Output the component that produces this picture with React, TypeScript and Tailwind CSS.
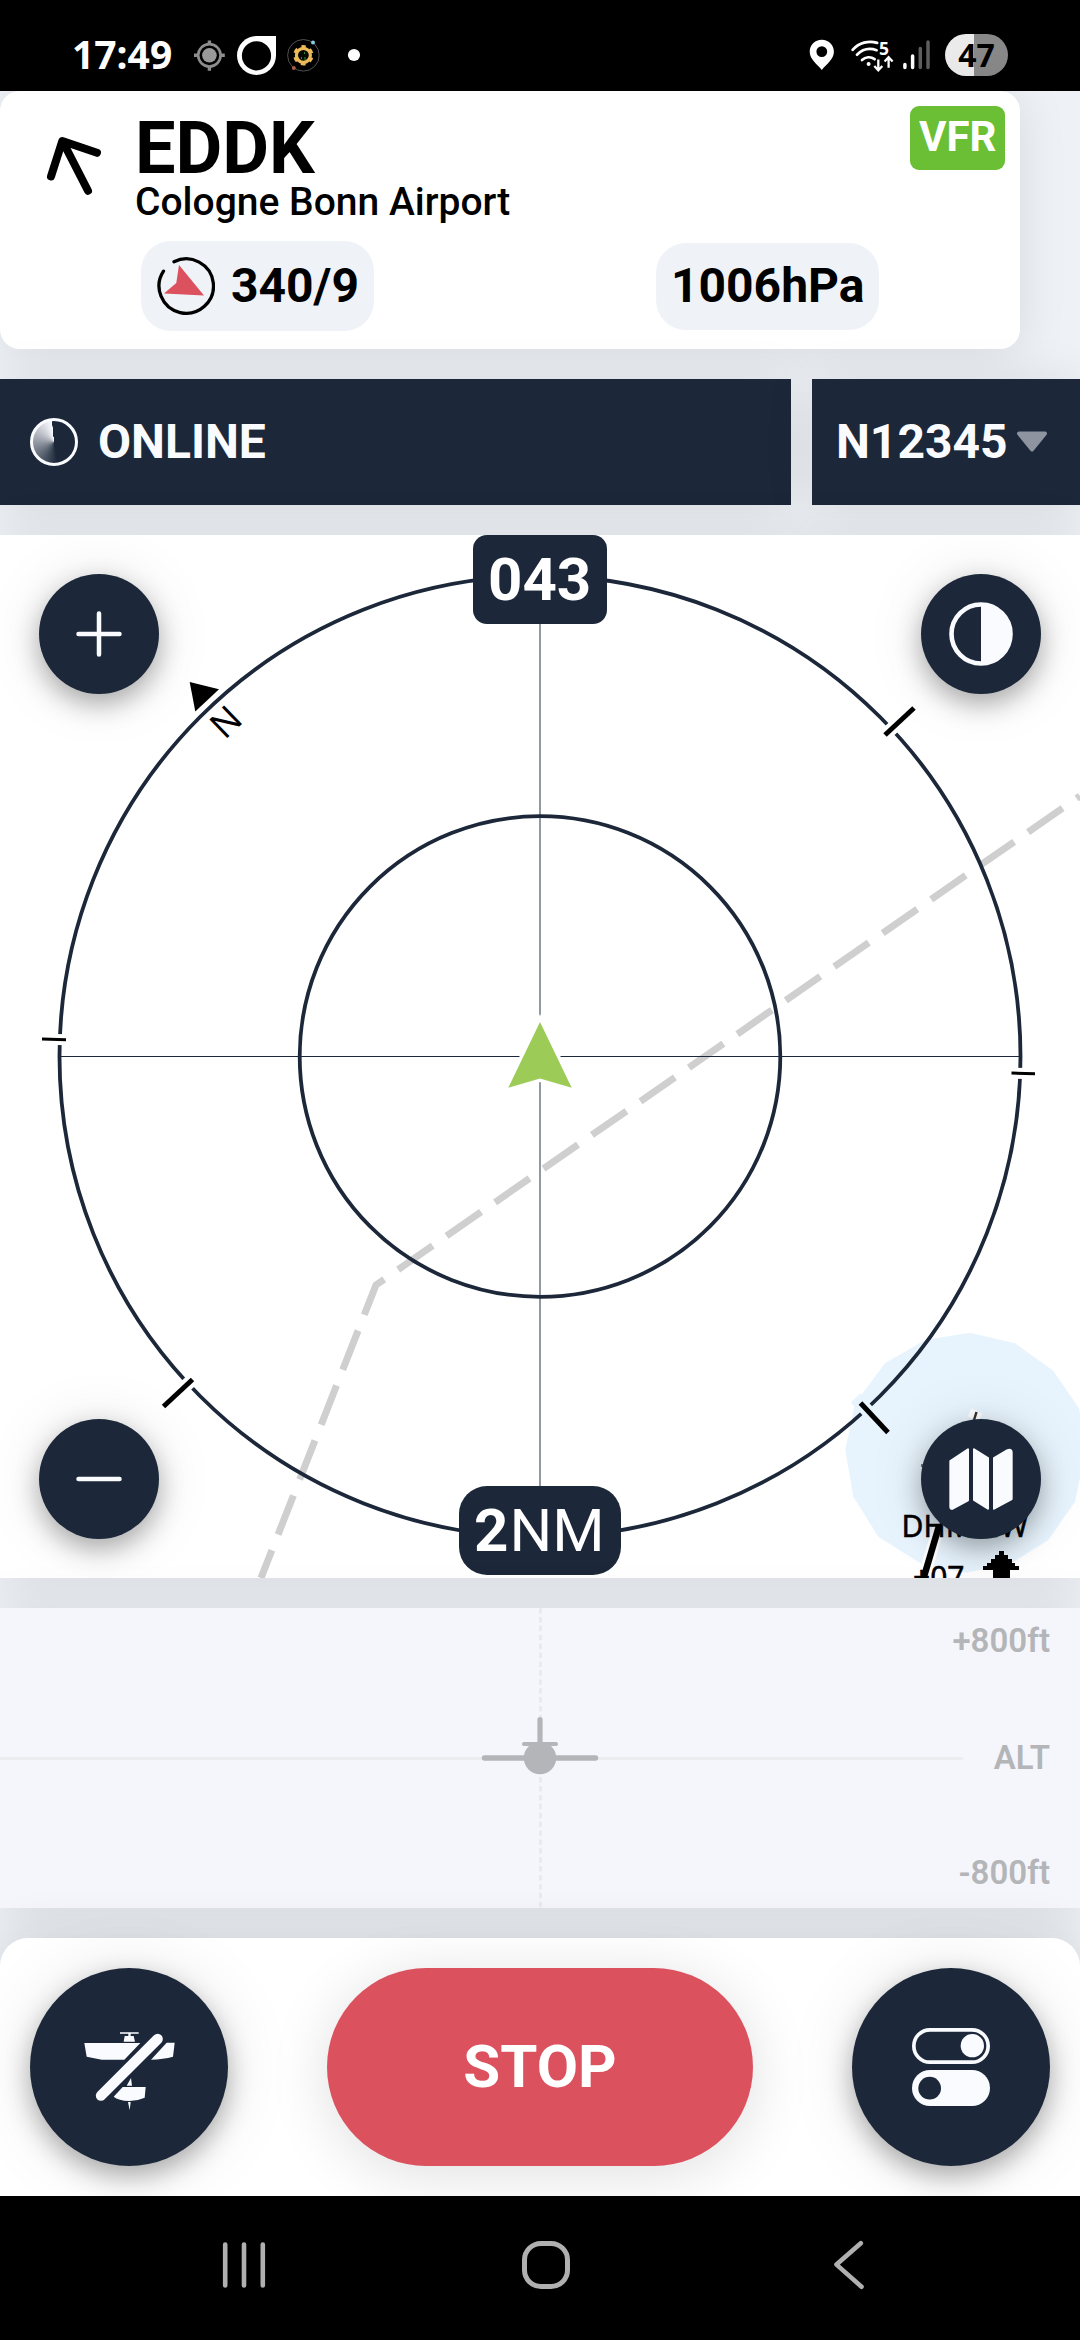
import React from "react";

const NAVY = "#1c2839";
const LIGHT = "#fafbff";

function StatusBar() {
  return (
    <header className="flex h-[91px] items-center bg-black pt-[19px] pl-[72px] pr-[72px] text-white">
      <span className="w-[118px] font-['Noto_Sans'] text-[39px] font-bold leading-[35px] pb-[4px]">17:49</span>
      <svg width="180" height="44" viewBox="190 33 180 44" fill="none">
        <circle cx="209.4" cy="55.3" r="11.2" stroke="#8e8e8e" strokeWidth="2.6" />
        <circle cx="209.4" cy="55.3" r="7.3" fill="#9a9a9a" />
        <path d="M209.4 40.5v4M209.4 66v4.8M194 55.3h4.5M220 55.3h4.8" stroke="#8e8e8e" strokeWidth="3.4" />
        <path d="M256.5 36H276v19.5A19.5 19.5 0 1 1 256.5 36Z" fill="#fff" />
        <circle cx="256.5" cy="55.8" r="14.6" fill="#000" />
        <circle cx="303.4" cy="55.3" r="15.8" stroke="#5b5b5b" strokeWidth="0.9" />
        <circle cx="303.4" cy="55.3" r="7" stroke="#eebb5c" strokeWidth="3.2" fill="#050a05" />
        <circle cx="303.4" cy="55.3" r="8.8" stroke="#eebb5c" strokeWidth="2.8" strokeDasharray="4.6 4.615" strokeDashoffset="2.3" transform="rotate(-90 303.4 55.3)" />
        <path d="M301.5 57v2M304.5 52v2M305 57v3M301.8 59.8v1" stroke="#2c8a3a" strokeWidth="1" />
        <circle cx="313" cy="42.4" r="2" fill="#86cfe0" />
        <circle cx="293.8" cy="68" r="2" fill="#a85f45" />
        <circle cx="354" cy="55" r="6.1" fill="#fff" />
      </svg>
      <div className="flex-1" />
      <svg width="126" height="44" viewBox="806 33 126 44" fill="none">
        <path fillRule="evenodd" d="M821.8 39.8c6.9 0 12.1 5.4 12.1 12 0 7.600-7.500 12.600-12.100 18.100-4.600-5.500-12.100-10.500-12.100-18.100 0-6.600 5.200-12 12.100-12Zm0 6.400a5.400 5.400 0 1 0 0 10.800 5.400 5.400 0 0 0 0-10.800Z" fill="#fff" />
        <path d="M852.6 49.800c6.600-7.200 16-9.600 24.600-6.900M857 54.800c5-5.200 12.200-7.300 19.600-4.600M862 60c3.400-3.200 8.600-3.800 12.600-0.800" stroke="#fff" strokeWidth="2.700" strokeLinecap="round" />
        <circle cx="868.600" cy="64" r="2" fill="#fff" />
        <text x="879" y="54.500" fontFamily="Noto Sans, sans-serif" fontWeight="700" fontSize="17.500" fill="#fff">5</text>
        <path d="M878.300 59.500v10M874.300 66l4 4.300 4-4.300M888.600 67.800v-10M884.600 61.500l4-4.300 4 4.300" stroke="#fff" strokeWidth="2.300" />
        <g strokeWidth="3.500" strokeLinecap="round">
          <path d="M904.900 64.500v3M912.600 56v11.500" stroke="#fff" />
          <path d="M920.300 48.500v19M928 42v25.500" stroke="#5e5e5e" />
        </g>
      </svg>
      <div className="ml-[13px] flex h-[42px] w-[63px] items-center justify-center rounded-full bg-linear-to-r from-[#ebebeb] from-46% to-[#888888] to-46%">
        <span className="font-['Noto_Sans'] text-[32px] font-bold leading-[32px] text-black">47</span>
      </div>
    </header>
  );
}

function AirportCard() {
  return (
    <section className="flex h-[258px] w-[1020px] rounded-[20px] bg-white shadow-[0_4px_50px_rgba(0,0,0,0.10)]">
      <div className="w-[135px] pt-[38px] pl-[40px]">
        <svg width="66" height="72" viewBox="40 129 66 72" fill="none" stroke="#000" strokeWidth="8" strokeLinecap="round" strokeLinejoin="round">
          <path d="M51 176.500 62.300 141l34.700 11.800M63 142l25 48.800" />
        </svg>
      </div>
      <div className="flex-1 pt-[22px] text-black">
        <h1 className="text-[72px] font-bold leading-[72px]">EDDK</h1>
        <p className="text-[39px] font-medium leading-[34px]">Cologne Bonn Airport</p>
        <div className="mt-[22px] ml-[6px] flex items-center justify-between pr-[20px]">
          <div className="flex h-[90px] w-[233px] items-center rounded-[30px] bg-[#eff2f7] pl-[16px]">
            <svg width="58" height="62" viewBox="157 255 58 62" fill="none">
              <path d="M174 261.800A27.200 27.200 0 1 1 163.500 271.200" stroke="#000" strokeWidth="3.300" strokeLinecap="round" />
              <path d="M179 265l25 30.600-40-2.200 12.300-10.400Z" fill="#dc515e" />
            </svg>
            <span className="ml-[16px] text-[48px] font-bold leading-[48px]">340/9</span>
          </div>
          <div className="mr-[-5px] flex h-[87px] w-[223px] items-center rounded-[30px] bg-[#eff2f7] pl-[15px] text-[48px] font-bold leading-[48px]">
            1006hPa
          </div>
        </div>
      </div>
      <div className="w-[126px] pt-[15px]">
        <div className="ml-[16px] h-[64px] w-[95px] rounded-[9px] bg-[#6abf35] pt-[9px] pl-[9px] text-[42px] font-bold leading-[44px] text-white">VFR</div>
      </div>
    </section>
  );
}

function StatusRow() {
  return (
    <section className="mt-[30px] flex h-[126px] gap-[21px] text-[48px] font-bold leading-[48px] text-[#fafbff]">
      <div className="flex w-[791px] items-center bg-[#1c2839] pl-[30px] shadow-[0_4px_50px_rgba(0,0,0,0.10)]">
        <div className="h-[48px] w-[48px] rounded-full border-[3px] border-[#fafbff] bg-[conic-gradient(#1c2839_0deg,#1c2839_170deg,#fafbff_354deg,#1c2839_355deg)]" />
        <span className="ml-[20px]">ONLINE</span>
      </div>
      <div className="flex flex-1 items-center bg-[#1c2839] pl-[24px] shadow-[0_4px_50px_rgba(0,0,0,0.10)]">
        <span>N12345</span>
        <svg className="ml-[8px]" width="33" height="22" viewBox="0 0 33 22">
          <path d="M3 2.500h26L16 18.500Z" fill="#8e94a0" stroke="#8e94a0" strokeWidth="4" strokeLinejoin="round" />
        </svg>
      </div>
    </section>
  );
}

const BLOB =
  "970,1332.700 1015,1343.300 1053.300,1370.700 1079,1408.300 1086,1450 1075,1501.700 1048.300,1540 1011.700,1563.300 966.700,1572.700 923.300,1565 878.300,1536.700 853.300,1496.700 845.300,1450 855,1403.300 885,1363.300 925,1340";

function Tick({ x1, y1, x2, y2, w }: { x1: number; y1: number; x2: number; y2: number; w: number }) {
  return (
    <g fill="none">
      <line x1={x1} y1={y1} x2={x2} y2={y2} stroke="#fff" strokeWidth={w + 8} />
      <line x1={x1} y1={y1} x2={x2} y2={y2} stroke="#000" strokeWidth={w} />
    </g>
  );
}

function RoundButton({ className, children }: { className: string; children: React.ReactNode }) {
  return (
    <button className={`absolute flex h-[120px] w-[120px] items-center justify-center rounded-full bg-[#1c2839] shadow-[0_10px_26px_rgba(0,0,0,0.30),0_2px_60px_rgba(0,0,0,0.10)] ${className}`}>
      {children}
    </button>
  );
}

function MapView() {
  return (
    <section className="relative mt-[30px] h-[1043px] overflow-hidden bg-white shadow-[0_4px_50px_rgba(0,0,0,0.10)]">
      <svg className="block" width="1080" height="1043" viewBox="0 535 1080 1043" fill="none">
        <path d="M1080 796 376 1285 261 1578" stroke="#cfcfcf" strokeWidth="7" strokeDasharray="42 17" strokeDashoffset="37.800" />
        <polygon points={BLOB} fill="#e8f4fd" />
        <g stroke={NAVY}>
          <circle cx="540" cy="1056.500" r="480.500" strokeWidth="3.800" />
          <circle cx="540" cy="1056.500" r="240.300" strokeWidth="3.800" />
          <path d="M60 1056.500H1020" strokeWidth="1" />
          <path d="M540 576V1536" strokeWidth="1.200" strokeOpacity="0.800" />
        </g>
        <path d="M540 1022 571.700 1087.700 540 1078.500 508.300 1087.700Z" fill="#fff" stroke="#fff" strokeWidth="7" />
        <path d="M540 1022 571.700 1087.700 540 1078.500 508.300 1087.700Z" fill="#9ccb57" />

        <Tick x1={914} y1={708} x2={885} y2={735} w={5} />
        <Tick x1={192.500} y1={1379.500} x2={163.500} y2={1406.500} w={5} />
        <Tick x1={42} y1={1039} x2={66} y2={1039.700} w={3} />
        <Tick x1={1011.500} y1={1073} x2={1035} y2={1073.700} w={3} />
        <line x1="855.500" y1="1398" x2="889" y2="1434" stroke="#e8f4fd" strokeWidth="13" />
        <line x1="860.500" y1="1403" x2="888" y2="1432.500" stroke="#000" strokeWidth="5" />

        <path d="M189.700 682 219 689.300 195.300 711.500Z" fill="#000" stroke="#fff" strokeWidth="5" paintOrder="stroke" />
        <text transform="translate(225.500 721.700) rotate(-44)" x="-13.500" y="13" fontFamily="Noto Sans, sans-serif" fontSize="36" fill="#000" stroke="#fff" strokeWidth="3" paintOrder="stroke">N</text>

        <g stroke="#fff" strokeWidth="12">
          <path d="M939 1526 923 1580M977 1411l-4 8" />
        </g>
        <path d="M976.500 1412l-2.500 8" stroke="#333" strokeWidth="2.500" />
        <path d="M921 1465.500h4" stroke="#777" strokeWidth="3" />
        <g fontFamily="Noto Sans, sans-serif" fontSize="30" fill="#000" stroke="#000" strokeWidth="0.500">
          <text x="901.500" y="1536.500">DHMMW</text>
          <text x="913" y="1588">+07</text>
        </g>
        <path d="M939 1526 923 1580" stroke="#000" strokeWidth="6.500" />
        <path shapeRendering="crispEdges" d="M998.500 1551h5v4h4v4h4v4h3v3h4v4h-9v9h-17v-9h-10v-4h4v-3h4v-4h4v-4h4Z" fill="#000" />
      </svg>

      <div className="absolute top-0 left-[473px] h-[89px] w-[134px] rounded-[14px] bg-[#1c2839] pl-[15px] text-[60px] font-bold leading-[89px] text-white">043</div>
      <div className="absolute top-[951px] left-[459px] h-[89px] w-[162px] rounded-[28px] bg-[#1c2839] pl-[15px] text-[60px] leading-[89px] text-white">
        <b>2</b><span className="ml-px">NM</span>
      </div>

      <RoundButton className="top-[39px] left-[39px]">
        <svg width="48" height="48" viewBox="0 0 48 48" stroke={LIGHT} strokeWidth="4.500" strokeLinecap="round"><path d="M24 3.500v41M3.500 24h41" /></svg>
      </RoundButton>
      <RoundButton className="top-[39px] right-[39px]">
        <svg width="64" height="64" viewBox="0 0 64 64">
          <circle cx="32" cy="32" r="29.500" fill="none" stroke={LIGHT} strokeWidth="4.600" />
          <path d="M32 2a30 30 0 0 1 0 60Z" fill={LIGHT} />
        </svg>
      </RoundButton>
      <RoundButton className="bottom-[39px] left-[39px]">
        <svg width="48" height="48" viewBox="0 0 48 48" stroke={LIGHT} strokeWidth="4.500" strokeLinecap="round"><path d="M3.500 24h41" /></svg>
      </RoundButton>
      <RoundButton className="right-[39px] bottom-[39px]">
        <svg width="120" height="120" viewBox="483 357 360 360" fill={LIGHT} stroke={LIGHT} strokeWidth="6" strokeLinejoin="round">
          <path d="M571 483 624 448V601L578 626Q571 628 571 620Z" />
          <path d="M642 448 684 474V626L642 600Z" />
          <path d="M702 474 741 451Q755 446 755 457V597L702 626Z" />
        </svg>
      </RoundButton>
    </section>
  );
}

function AltitudePanel() {
  return (
    <section className="relative mt-[30px] flex h-[300px] flex-col items-end justify-between bg-[#f4f6fb] pt-[14px] pr-[30px] pb-[16px] text-[33px] font-semibold leading-[38px] text-[#b4b5b9] shadow-[0_4px_50px_rgba(0,0,0,0.10)]">
      <svg className="absolute inset-0" width="1080" height="300" viewBox="0 1608 1080 300" fill="none">
        <path d="M0 1758.500H963" stroke="#ecedf1" strokeWidth="3" />
        <path d="M540.500 1608V1908" stroke="#e9eaee" strokeWidth="3" strokeDasharray="5.500 3.400" />
        <g stroke="#b4b5b9" strokeLinecap="round">
          <path d="M484.500 1758H595.500" strokeWidth="5.500" />
          <path d="M540 1719.500V1745" strokeWidth="5.200" />
          <path d="M524 1744H556" strokeWidth="4.200" />
        </g>
        <circle cx="540" cy="1758" r="16.200" fill="#b4b5b9" />
      </svg>
      <span className="relative">+800ft</span>
      <span className="relative top-px">ALT</span>
      <span className="relative">-800ft</span>
    </section>
  );
}

function ControlBar() {
  return (
    <section className="relative mt-[30px] flex h-[258px] items-center justify-between rounded-t-[28px] bg-white px-[30px] shadow-[0_0_50px_rgba(0,0,0,0.14)]">
      <button className="h-[198px] w-[198px] rounded-full bg-[#1c2839] shadow-[0_10px_26px_rgba(0,0,0,0.30),0_2px_70px_rgba(0,0,0,0.10)]">
        <svg width="198" height="198" viewBox="90 114 594 594" fill={LIGHT}>
          <path d="M360 307h56v4h-24v7h9l4 17h-34l3-17h11v-7h-25Z" />
          <path d="M253 339H421L373 389H305L260 380Z" />
          <path d="M500 338H524L519 380Q490 388 453 389Z" />
          <path d="M303 497 473 327" stroke={LIGHT} strokeWidth="31" strokeLinecap="round" />
          <path d="M393 444 396 467H380Z" />
          <path d="M368 471H437L434 503Q412 513 388 513 355 512 341 500Z" />
          <path d="M384 516H392L389 541Z" />
        </svg>
      </button>
      <button className="h-[198px] w-[426px] rounded-[99px] bg-[#db515e] text-[60px] font-bold leading-[60px] text-white shadow-[0_8px_60px_rgba(0,0,0,0.13)]">STOP</button>
      <button className="h-[198px] w-[198px] rounded-full bg-[#1c2839] shadow-[0_10px_26px_rgba(0,0,0,0.30),0_2px_70px_rgba(0,0,0,0.10)]">
        <svg width="198" height="198" viewBox="516 114 594 594">
          <rect x="701.500" y="299.500" width="223" height="97" rx="48.500" fill="none" stroke={LIGHT} strokeWidth="11" />
          <circle cx="877" cy="347" r="35" fill={LIGHT} />
          <rect x="696" y="420" width="234" height="108" rx="54" fill={LIGHT} />
          <circle cx="749" cy="474.500" r="34" fill={NAVY} />
        </svg>
      </button>
    </section>
  );
}

function NavBar() {
  return (
    <nav className="relative flex h-[144px] items-start bg-black pt-[43px] pl-[219px]">
      <svg width="50" height="52" viewBox="219 2239 50 52" stroke="#b0b0b0" strokeWidth="4.600" strokeLinecap="round">
        <path d="M225.200 2244.500V2285.500M244 2244.500V2285.500M262.800 2244.500V2285.500" />
      </svg>
      <div className="mt-[2px] ml-[253px] h-[48px] w-[48px] rounded-[19px] border-[5px] border-[#b0b0b0]" />
      <svg className="ml-[260px]" width="38" height="52" viewBox="830 2239 38 52" fill="none" stroke="#b0b0b0" strokeWidth="4.600" strokeLinecap="round" strokeLinejoin="round">
        <path d="M860.800 2243.300 836.500 2264.600 861.500 2286.700" />
      </svg>
    </nav>
  );
}

export default function App() {
  return (
    <main className="flex h-[2340px] w-[1080px] flex-col overflow-hidden bg-[#eef2f7] font-[Roboto,sans-serif]">
      <StatusBar />
      <AirportCard />
      <StatusRow />
      <MapView />
      <AltitudePanel />
      <ControlBar />
      <NavBar />
    </main>
  );
}
